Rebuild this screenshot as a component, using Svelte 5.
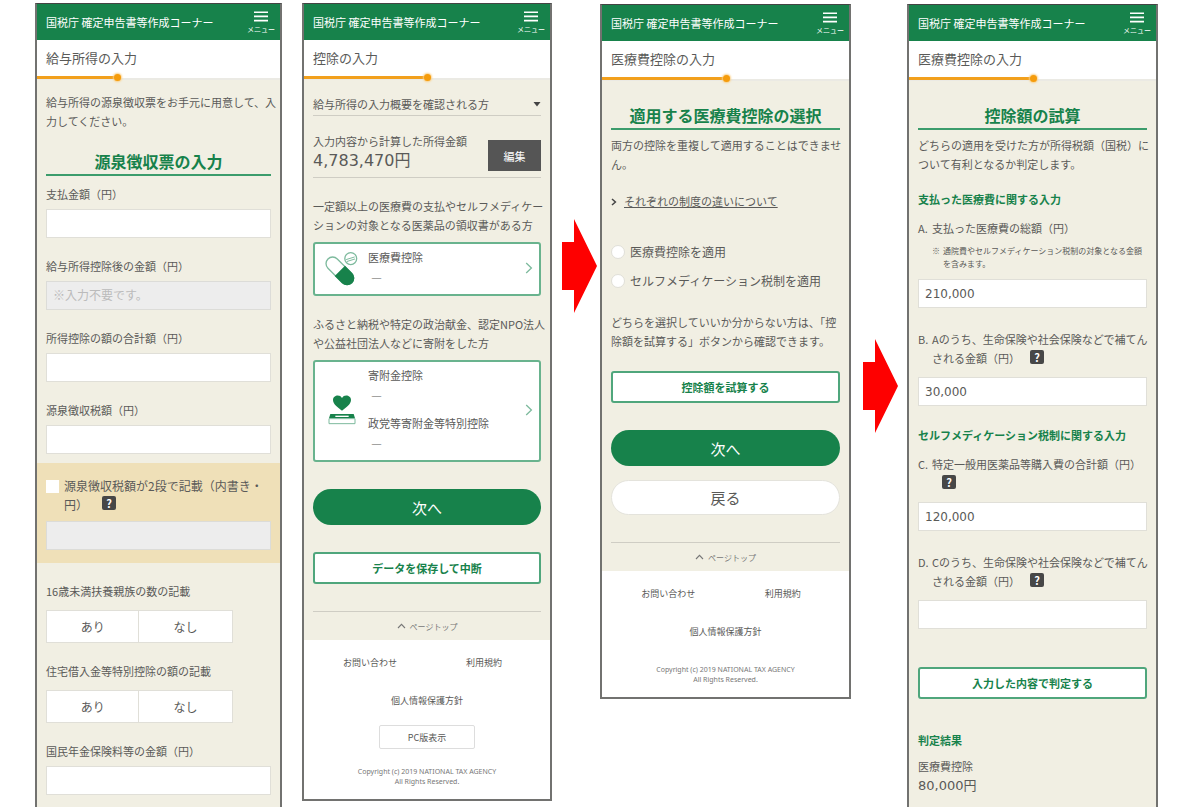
<script>
  let income = { payment: '', total: '', withholding: '', inner: '', pension: '' };
  let hasInner = false;
  let method = '';
  let medical = '210,000';
  let medicalCovered = '30,000';
  let selfMed = '120,000';
  let selfMedCovered = '';

  const yesNo = [
    { id: 'dependents', label: '16歳未満扶養親族の数の記載' },
    { id: 'housing', label: '住宅借入金等特別控除の額の記載' }
  ];
  let answers = { dependents: null, housing: null };
</script>

{#snippet top(title, progress)}
  <header class="bar">
    <span class="site">国税庁 確定申告書等作成コーナー</span>
    <button class="menu" type="button">
      <svg viewBox="0 0 14 11" width="14" height="11" aria-hidden="true">
        <path d="M0 1.2h14M0 5.4h14M0 9.6h14" stroke="#fff" stroke-width="1.6" />
      </svg>
      <span>メニュー</span>
    </button>
  </header>
  <h1>{title}</h1>
  <div class="progress">
    <div class="done" style="width: {progress}%"></div>
  </div>
{/snippet}

{#snippet help()}
  <button class="help" type="button" aria-label="ヘルプ">?</button>
{/snippet}

{#snippet chevron()}
  <svg class="chevron" viewBox="0 0 8 12" width="8" height="12" aria-hidden="true">
    <path d="M1.2 1l5.2 5-5.2 5" fill="none" stroke="#7dba9d" stroke-width="1.3" />
  </svg>
{/snippet}

{#snippet pageTop()}
  <a class="pagetop" href="#top">
    <svg viewBox="0 0 9 6" width="9" height="6" aria-hidden="true">
      <path d="M1 5l3.5-3.6L8 5" fill="none" stroke="#777" stroke-width="1.1" />
    </svg>
    ページトップ
  </a>
{/snippet}

{#snippet foot(pcLink)}
  <footer>
    <nav>
      <a href="#contact">お問い合わせ</a>
      <a href="#terms">利用規約</a>
      <a class="wide" href="#privacy">個人情報保護方針</a>
    </nav>
    {#if pcLink}
      <button class="pc" type="button">PC版表示</button>
    {/if}
    <small>Copyright (c) 2019 NATIONAL TAX AGENCY<br />All Rights Reserved.</small>
  </footer>
{/snippet}

{#snippet arrow()}
  <svg viewBox="0 0 35 94" width="35" height="94" aria-hidden="true">
    <path d="M0 23h12V0l23 47-23 47V71H0z" fill="#fe0000" />
  </svg>
{/snippet}

<main>
  <section class="phone cut">
    {@render top('給与所得の入力', 33)}
    <div class="body">
      <p class="intro">給与所得の源泉徴収票をお手元に用意して、入<br />力してください。</p>
      <h2>源泉徴収票の入力</h2>
      <div class="field first">
        <label for="payment">支払金額（円）</label>
        <input id="payment" type="text" bind:value={income.payment} />
      </div>
      <div class="field">
        <label for="after">給与所得控除後の金額（円）</label>
        <input id="after" type="text" placeholder="※入力不要です。" disabled />
      </div>
      <div class="field">
        <label for="total">所得控除の額の合計額（円）</label>
        <input id="total" type="text" bind:value={income.total} />
      </div>
      <div class="field">
        <label for="withholding">源泉徴収税額（円）</label>
        <input id="withholding" type="text" bind:value={income.withholding} />
      </div>
      <div class="band">
        <div class="check">
          <input id="has-inner" type="checkbox" bind:checked={hasInner} />
          <div>
            <label for="has-inner">源泉徴収税額が2段で記載（内書き・<br />円）</label>{@render help()}
          </div>
        </div>
        <input type="text" aria-label="内書き" disabled={!hasInner} bind:value={income.inner} />
      </div>
      {#each yesNo as q}
        <div class="field" role="group" aria-labelledby={q.id}>
          <span class="label" id={q.id}>{q.label}</span>
          <div class="toggle">
            <button type="button" aria-pressed={answers[q.id] === true} on:click={() => (answers[q.id] = true)}>あり</button>
            <button type="button" aria-pressed={answers[q.id] === false} on:click={() => (answers[q.id] = false)}>なし</button>
          </div>
        </div>
      {/each}
      <div class="field">
        <label for="pension">国民年金保険料等の金額（円）</label>
        <input id="pension" type="text" bind:value={income.pension} />
      </div>
    </div>
  </section>

  <section class="phone second">
    {@render top('控除の入力', 50)}
    <div class="body">
      <button class="accordion" type="button" aria-expanded="false">
        給与所得の入力概要を確認される方
        <svg viewBox="0 0 8 5" width="8" height="5" aria-hidden="true"><path d="M0.5 0h7L4 4.5z" fill="#444" /></svg>
      </button>
      <div class="summary">
        <div>
          <p>入力内容から計算した所得金額</p>
          <p class="amount">4,783,470円</p>
        </div>
        <button class="edit" type="button">編集</button>
      </div>
      <p class="lead">一定額以上の医療費の支払やセルフメディケー<br />ションの対象となる医薬品の領収書がある方</p>
      <a class="card" href="#medical">
        <svg class="icon" viewBox="0 0 100 104" width="33" height="35" aria-hidden="true">
          <g transform="rotate(45 45 59)">
            <rect x="-6" y="39" width="102" height="40" rx="20" fill="#fff" stroke="#7dba9d" stroke-width="4" />
            <path d="M45 37h31a22 22 0 0 1 0 44H45z" fill="#17824b" />
          </g>
          <circle cx="78" cy="22" r="18" fill="#fff" stroke="#7dba9d" stroke-width="4" />
          <path d="M64 25l26-8M66 31l25-8" stroke="#7dba9d" stroke-width="3" />
        </svg>
        <dl>
          <dt>医療費控除</dt>
          <dd>―</dd>
        </dl>
        {@render chevron()}
      </a>
      <p class="lead">ふるさと納税や特定の政治献金、認定NPO法人<br />や公益社団法人などに寄附をした方</p>
      <a class="card" href="#donation">
        <svg class="icon" viewBox="0 0 84 90" width="28" height="30" aria-hidden="true">
          <path d="M42 47C30 37 15 28 15 15 15 0 36-3 42 9 48-3 69 0 69 15 69 28 54 37 42 47z" fill="#17824b" />
          <path d="M7 57h70l4 13H3z" fill="#17824b" />
          <path d="M22 64h40" stroke="#fff" stroke-width="4" />
          <path d="M3 71v15h78V71z" fill="#fff" stroke="#7dba9d" stroke-width="3" />
        </svg>
        <dl>
          <dt>寄附金控除</dt>
          <dd>―</dd>
          <dt>政党等寄附金等特別控除</dt>
          <dd>―</dd>
        </dl>
        {@render chevron()}
      </a>
      <button class="next" type="button">次へ</button>
      <button class="outline after-next" type="button">データを保存して中断</button>
      {@render pageTop()}
    </div>
    {@render foot(true)}
  </section>

  <div class="arrow">{@render arrow()}</div>

  <section class="phone low">
    {@render top('医療費控除の入力', 50)}
    <div class="body">
      <h2>適用する医療費控除の選択</h2>
      <p class="under">両方の控除を重複して適用することはできませ<br />ん。</p>
      <p class="more">
        <svg viewBox="0 0 6 8" width="6" height="8" aria-hidden="true">
          <path d="M1 1l3.4 3L1 7" fill="none" stroke="#444" stroke-width="1.5" />
        </svg>
        <a href="#difference">それぞれの制度の違いについて</a>
      </p>
      <div class="radios">
        <label><input type="radio" name="method" value="medical" bind:group={method} />医療費控除を適用</label>
        <label><input type="radio" name="method" value="self" bind:group={method} />セルフメディケーション税制を適用</label>
      </div>
      <p class="hint">どちらを選択していいか分からない方は、「控<br />除額を試算する」ボタンから確認できます。</p>
      <button class="outline" type="button">控除額を試算する</button>
      <button class="next" type="button">次へ</button>
      <button class="back" type="button">戻る</button>
      {@render pageTop()}
    </div>
    {@render foot(false)}
  </section>

  <div class="arrow lower">{@render arrow()}</div>

  <section class="phone low cut">
    {@render top('医療費控除の入力', 50)}
    <div class="body">
      <h2>控除額の試算</h2>
      <p class="under">どちらの適用を受けた方が所得税額（国税）に<br />ついて有利となるか判定します。</p>
      <h3>支払った医療費に関する入力</h3>
      <div class="item near">
        <span>A.</span>
        <label for="a">支払った医療費の総額（円）</label>
      </div>
      <p class="note"><span>※</span><span>通院費やセルフメディケーション税制の対象となる金額<br />を含みます。</span></p>
      <input id="a" type="text" bind:value={medical} />
      <div class="item">
        <span>B.</span>
        <div><label for="b">Aのうち、生命保険や社会保険などで補てん<br />される金額（円）</label>{@render help()}</div>
      </div>
      <input id="b" type="text" bind:value={medicalCovered} />
      <h3>セルフメディケーション税制に関する入力</h3>
      <div class="item near">
        <span>C.</span>
        <div><label for="c">特定一般用医薬品等購入費の合計額（円）</label><br />{@render help()}</div>
      </div>
      <input id="c" type="text" bind:value={selfMed} />
      <div class="item">
        <span>D.</span>
        <div><label for="d">Cのうち、生命保険や社会保険などで補てん<br />される金額（円）</label>{@render help()}</div>
      </div>
      <input id="d" type="text" bind:value={selfMedCovered} />
      <button class="outline judge" type="button">入力した内容で判定する</button>
      <h3 class="result">判定結果</h3>
      <p>医療費控除</p>
      <p class="result-value">80,000円</p>
    </div>
  </section>
</main>

<style>
  :global(body) {
    background: #fff;
  }

  main {
    display: grid;
    grid-template-columns: 247fr 20px 250fr 48px 251fr 56px 251fr;
    align-items: start;
    box-sizing: border-box;
    min-height: 100vh;
    padding: 3px 42px 0 35px;
    color: #5a5a58;
    font-family: "Noto Sans CJK JP", sans-serif;
    font-size: 11px;
    line-height: 19px;
  }

  h1, h2, h3, p, dl, dt, dd {
    margin: 0;
    font-size: inherit;
  }

  button, input {
    box-sizing: border-box;
    margin: 0;
    font-family: inherit;
    color: inherit;
  }

  button {
    padding: 0;
    border: 0;
    cursor: pointer;
  }

  a {
    color: inherit;
    text-decoration: none;
  }

  .phone {
    box-sizing: border-box;
    min-width: 0;
    border: 2px solid #727270;
    border-top: 1px solid #444;
    white-space: nowrap;
  }

  .second {
    grid-column: 3;
  }

  .low {
    margin-top: 1px;
  }

  .cut {
    align-self: stretch;
    border-bottom: 0;
    background: #f1efe3;
  }

  .bar {
    display: flex;
    justify-content: space-between;
    align-items: center;
    height: 36px;
    padding: 0 5px 0 9px;
    background: #17824b;
    color: #fff;
  }

  .menu {
    display: flex;
    flex-direction: column;
    align-items: center;
    gap: 2px;
    padding-top: 1px;
    background: none;
    color: #fff;
    font-size: 7px;
    line-height: 10px;
  }

  h1 {
    padding: 0 9px;
    background: #fff;
    font-size: 13px;
    font-weight: 400;
    line-height: 36px;
  }

  .progress {
    height: 4px;
    background: linear-gradient(#fff 50%, #ebeae4 50%);
  }

  .done {
    position: relative;
    height: 3px;
    background: #f2a01c;
  }

  .done::after {
    content: "";
    position: absolute;
    top: -2px;
    right: -4px;
    width: 7px;
    height: 7px;
    border-radius: 50%;
    background: #f59c0c;
    box-shadow: 0 0 2px 1px #fbcf85;
  }

  .body {
    display: flow-root;
    padding: 0 9px;
    background: #f1efe3;
  }

  .intro {
    margin: 13px 0 18px;
  }

  h2 {
    border-bottom: 2px solid #3c9c6c;
    color: #17824b;
    font-size: 16px;
    line-height: 25px;
    text-align: center;
  }

  .low h2 {
    margin-top: 22px;
  }

  h3 {
    margin-top: 20px;
    color: #17824b;
  }

  input[type="text"] {
    display: block;
    width: 100%;
    height: 29px;
    padding: 0 6px;
    border: 1px solid #e0dfd8;
    border-radius: 0;
    background: #fff;
    font-family: "DejaVu Sans", "Noto Sans CJK JP", sans-serif;
    font-size: 12px;
  }

  input[type="text"]:disabled {
    border-color: #dcdcd8;
    background: #ededed;
  }

  input::placeholder {
    color: #bbb;
    font-family: "Noto Sans CJK JP", sans-serif;
  }

  .field {
    display: flex;
    flex-direction: column;
    gap: 5px;
    margin-top: 19px;
  }

  .field.first {
    margin-top: 9px;
  }

  .band {
    margin: 9px -9px 17px;
    padding: 13px 9px;
    background: #efe0b8;
  }

  .check {
    display: flex;
    gap: 5px;
    margin-bottom: 7px;
    font-size: 12px;
  }

  .check input {
    appearance: none;
    flex: none;
    width: 13px;
    height: 13px;
    margin-top: 4px;
    background: #fff;
  }

  .check input:checked {
    background: #17824b;
  }

  .help {
    width: 14px;
    height: 14px;
    margin-left: 10px;
    border-radius: 2px;
    background: #474747;
    color: #fff;
    font-size: 11px;
    font-weight: 700;
    line-height: 14px;
    vertical-align: text-top;
  }

  .check .help {
    margin-left: 14px;
  }

  .toggle {
    display: grid;
    grid-template-columns: 1fr 1fr;
    width: 83%;
    margin-top: 4px;
  }

  .toggle button {
    height: 33px;
    border: 1px solid #e0dfd8;
    background: #fff;
    font-size: 12px;
  }

  .toggle button + button {
    border-left: 0;
  }

  .accordion {
    display: flex;
    justify-content: space-between;
    align-items: center;
    width: 100%;
    margin-top: 14px;
    border-bottom: 1px solid #cfcdc4;
    background: none;
    font-size: 11px;
    line-height: 21px;
  }

  .summary {
    display: flex;
    justify-content: space-between;
    align-items: flex-end;
    padding: 16px 0 6px;
    border-bottom: 1px solid #cfcdc4;
  }

  .amount {
    font-family: "DejaVu Sans", "Noto Sans CJK JP", sans-serif;
    font-size: 16px;
    line-height: 20px;
  }

  .edit {
    width: 53px;
    height: 31px;
    background: #555;
    color: #fff;
    font-size: 11px;
  }

  .lead {
    margin: 19px 0 7px;
  }

  .card {
    display: grid;
    grid-template-columns: 53px 1fr 8px;
    align-items: center;
    padding: 3px 6px 5px 0;
    border: 2px solid #69b38e;
    border-radius: 3px;
    background: #fff;
    line-height: 21px;
  }

  .icon {
    justify-self: center;
  }

  dd {
    padding-left: 3px;
  }

  dd + dt {
    margin-top: 6px;
  }

  .next, .back, .outline {
    display: block;
    width: 100%;
  }

  .next {
    height: 36px;
    margin-top: 27px;
    border-radius: 18px;
    background: #17824b;
    color: #fff;
    font-size: 15px;
  }

  .back {
    height: 35px;
    margin-top: 14px;
    border: 1px solid #e4e3dc;
    border-radius: 18px;
    background: #fff;
    font-size: 15px;
  }

  .outline {
    height: 32px;
    border: 2px solid #4fa67c;
    border-radius: 3px;
    background: #fff;
    color: #17824b;
    font-size: 11px;
    font-weight: 700;
  }

  .after-next {
    margin-top: 27px;
  }

  .pagetop {
    display: flex;
    justify-content: center;
    align-items: center;
    gap: 4px;
    height: 28px;
    margin-top: 27px;
    border-top: 1px solid #cfcdc4;
    color: #777;
    font-size: 8px;
  }

  footer {
    padding: 14px 9px 12px;
    background: #fff;
    font-size: 9px;
    text-align: center;
  }

  nav {
    display: grid;
    grid-template-columns: 1fr 1fr;
    row-gap: 20px;
    line-height: 18px;
  }

  .wide {
    grid-column: 1 / -1;
  }

  .pc {
    display: block;
    width: 96px;
    height: 24px;
    margin: 15px auto 0;
    border: 1px solid #ddd;
    border-radius: 2px;
    background: #fff;
    font-size: 9px;
  }

  small {
    display: block;
    margin-top: 18px;
    color: #777;
    font-family: "Noto Sans", sans-serif;
    font-size: 7px;
    line-height: 10px;
  }

  nav + small {
    margin-top: 24px;
  }

  .arrow {
    margin: 216px 0 0 10px;
  }

  .arrow.lower {
    margin: 336px 0 0 12px;
  }

  .arrow svg {
    display: block;
  }

  .under {
    margin-top: 6px;
  }

  .under + h3 {
    margin-top: 16px;
  }

  .more {
    display: flex;
    align-items: center;
    gap: 7px;
    margin-top: 18px;
  }

  .more a {
    text-decoration: underline;
  }

  .radios {
    display: grid;
    margin: 26px 0 18px;
    font-size: 12px;
    line-height: 29px;
  }

  .radios label {
    display: flex;
    align-items: center;
    gap: 5px;
  }

  .radios input {
    appearance: none;
    width: 14px;
    height: 14px;
    border: 1px solid #e0dfd8;
    border-radius: 50%;
    background: #fff;
  }

  .radios input:checked {
    border: 4px solid #17824b;
  }

  .hint {
    margin-bottom: 20px;
  }

  .item {
    display: grid;
    grid-template-columns: 14px 1fr;
    margin: 22px 0 9px;
  }

  .item.near {
    margin-top: 10px;
  }

  .note {
    display: flex;
    gap: 3px;
    margin: -3px 0 9px 14px;
    font-size: 8px;
    line-height: 13px;
  }

  .judge {
    margin-top: 38px;
  }

  .result {
    margin: 32px 0 7px;
  }

  .result-value {
    font-family: "DejaVu Sans", "Noto Sans CJK JP", sans-serif;
    font-size: 13px;
    line-height: 20px;
  }
</style>
